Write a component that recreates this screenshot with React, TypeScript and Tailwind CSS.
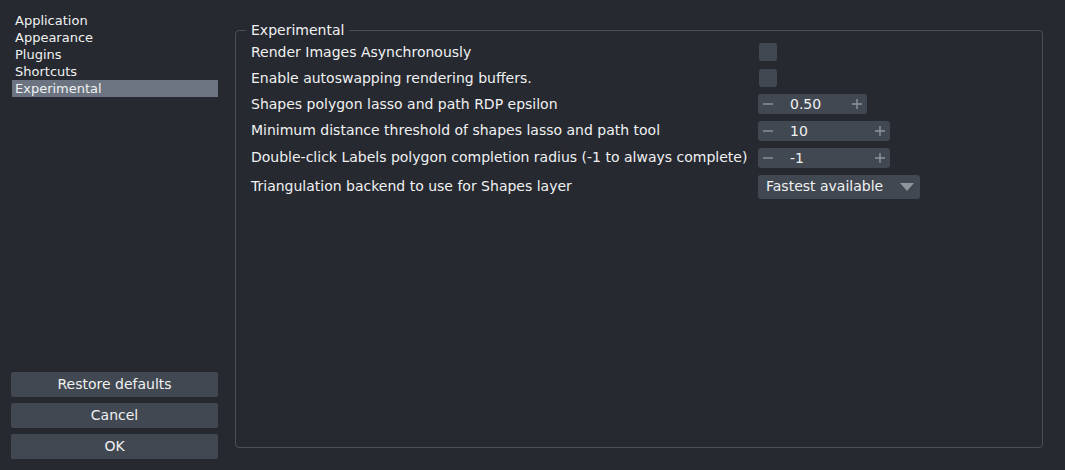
import React, { useState } from 'react';

const sections = ['Application', 'Appearance', 'Plugins', 'Shortcuts', 'Experimental'];

const Checkbox: React.FC = () => (
    <div className="ml-px w-[18px] h-[18px] rounded-[3px] bg-[#414851]" />
);

const SpinBox: React.FC<{ value: string; width: string }> = ({ value, width }) => (
    <div className={`${width} h-[20px] rounded-[3px] bg-[#414851] flex items-center pl-[5px] pr-[5px] text-[14px]`}>
        <svg width="10" height="10" viewBox="0 0 10 10" className="text-[#8f959c]">
            <path d="M0 5h10" stroke="currentColor" strokeWidth="1.4" />
        </svg>
        <span className="ml-[17px] flex-1 leading-none">{value}</span>
        <svg width="10" height="10" viewBox="0 0 10 10" className="text-[#8f959c]">
            <path d="M0 5h10M5 0v10" stroke="currentColor" strokeWidth="1.4" />
        </svg>
    </div>
);

const ComboBox: React.FC = () => (
    <div className="w-[162px] h-[24px] rounded-[3px] bg-[#414851] flex items-center pl-[8px] pr-[6px] text-[14px]">
        <span className="flex-1">Fastest available</span>
        <svg width="14" height="8" viewBox="0 0 14 8" className="text-[#8f959c]">
            <path d="M0 0h14L7 8z" fill="currentColor" />
        </svg>
    </div>
);

export default function App() {
    const [selected, setSelected] = useState('Experimental');

    const rows: { label: string; h: string; control: React.ReactNode }[] = [
        { label: 'Render Images Asynchronously', h: 'h-[26px]', control: <Checkbox /> },
        { label: 'Enable autoswapping rendering buffers.', h: 'h-[26px]', control: <Checkbox /> },
        { label: 'Shapes polygon lasso and path RDP epsilon', h: 'h-[26px]', control: <SpinBox value="0.50" width="w-[109px]" /> },
        { label: 'Minimum distance threshold of shapes lasso and path tool', h: 'h-[27px]', control: <SpinBox value="10" width="w-[132px]" /> },
        { label: 'Double-click Labels polygon completion radius (-1 to always complete)', h: 'h-[27px]', control: <SpinBox value="-1" width="w-[132px]" /> },
        { label: 'Triangulation backend to use for Shapes layer', h: 'h-[31px]', control: <ComboBox /> },
    ];

    return (
        <div className="h-[470px] w-full bg-[#262930] text-[#f0f1f2] flex pl-[11px] pr-[22px]" style={{ fontFamily: '"DejaVu Sans", sans-serif' }}>
            <div className="w-[207px] flex flex-col justify-between pt-[12px] pb-[11px]">
                <ul className="text-[13px]">
                    {sections.map(s => (
                        <li
                            key={s}
                            onClick={() => setSelected(s)}
                            className={`h-[17px] leading-[17px] pl-[3px] ml-px ${selected === s ? 'bg-[#6b7480]' : ''}`}
                        >
                            {s}
                        </li>
                    ))}
                </ul>
                <div className="flex flex-col gap-[6px] text-[14px]">
                    <button className="h-[25px] rounded-[2px] bg-[#414851]">Restore defaults</button>
                    <button className="h-[25px] rounded-[2px] bg-[#414851]">Cancel</button>
                    <button className="h-[25px] rounded-[2px] bg-[#414851]">OK</button>
                </div>
            </div>
            <div className="flex-1 ml-[17px] pt-[22px] pb-[22px] flex">
                <fieldset className="flex-1 border border-[#4a5059] rounded-[4px] pl-[15px]">
                    <legend className="text-[14px] leading-[17px] px-[5px] -ml-[5px]">Experimental</legend>
                    <div className="grid grid-cols-[507px_auto] text-[14px]">
                        {rows.map(r => (
                            <React.Fragment key={r.label}>
                                <div className={`${r.h} flex items-center whitespace-nowrap`}>{r.label}</div>
                                <div className={`${r.h} flex items-center`}>{r.control}</div>
                            </React.Fragment>
                        ))}
                    </div>
                </fieldset>
            </div>
        </div>
    );
}
